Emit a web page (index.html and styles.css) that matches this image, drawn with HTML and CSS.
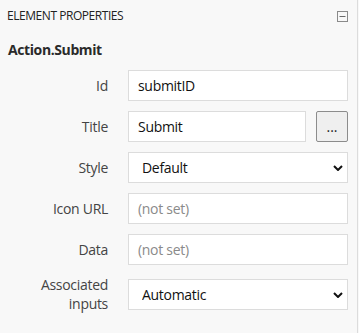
FILE: index.html
```html
<!DOCTYPE html>
<html>
<head>
<meta charset="utf-8">
<link rel="stylesheet" href="styles.css">
</head>
<body>
<div class="panel">
  <div class="header">
    <span class="header-title">ELEMENT PROPERTIES</span>
    <svg class="collapse" width="11" height="11" viewBox="0 0 11 11"><rect x="0.5" y="0.5" width="10" height="10" fill="none" stroke="#8a8a8a"/><line x1="2.5" y1="5.5" x2="8.5" y2="5.5" stroke="#6a6a6a"/></svg>
  </div>
  <div class="element-name">Action.Submit</div>
  <div class="form">
    <div class="row">
      <label class="label">Id</label>
      <input class="field" type="text" value="submitID">
    </div>
    <div class="row">
      <label class="label">Title</label>
      <div class="field-group">
        <input class="field" type="text" value="Submit">
        <button class="more">...</button>
      </div>
    </div>
    <div class="row">
      <label class="label">Style</label>
      <div class="select-wrap">
        <select class="field select"><option>Default</option></select>
        <svg class="chevron" width="10" height="6" viewBox="0 0 10 6"><path d="M1 1 L5 5 L9 1" fill="none" stroke="#111" stroke-width="2"/></svg>
      </div>
    </div>
    <div class="row">
      <label class="label">Icon URL</label>
      <input class="field" type="text" placeholder="(not set)">
    </div>
    <div class="row">
      <label class="label">Data</label>
      <input class="field" type="text" placeholder="(not set)">
    </div>
    <div class="row">
      <label class="label">Associated inputs</label>
      <div class="select-wrap">
        <select class="field select"><option>Automatic</option></select>
        <svg class="chevron" width="10" height="6" viewBox="0 0 10 6"><path d="M1 1 L5 5 L9 1" fill="none" stroke="#111" stroke-width="2"/></svg>
      </div>
    </div>
  </div>
</div>
</body>
</html>
```

FILE: styles.css
```css
html, body {
  margin: 0;
  padding: 0;
  background: #f8f8f8;
}
body {
  font-family: "Open Sans", "Noto Sans", sans-serif;
  color: #222;
}
.panel {
  width: 358px;
  height: 333px;
  box-sizing: border-box;
  border-right: 1px solid #dcdcdc;
  padding: 8px 9px 0 8px;
}
.header {
  display: flex;
  align-items: center;
  justify-content: space-between;
  height: 16px;
  margin-left: -1px;
}
.header-title {
  font-size: 12px;
  line-height: 16px;
  letter-spacing: -0.45px;
  color: #222;
}
.collapse {
  display: block;
}
.element-name {
  margin-top: 16px;
  font-size: 14px;
  line-height: 20px;
  font-weight: 700;
  letter-spacing: -0.4px;
  color: #2a2a2a;
}
.form {
  margin-top: 10px;
  display: flex;
  flex-direction: column;
  gap: 10px;
}
.row {
  display: flex;
  align-items: center;
  gap: 20px;
}
.label {
  width: 100px;
  flex: none;
  text-align: right;
  font-size: 14px;
  line-height: 19px;
  letter-spacing: -0.3px;
  color: #444;
}
.field {
  box-sizing: border-box;
  width: 220px;
  height: 31px;
  margin: 0;
  padding: 0 9px;
  border: 1px solid #dcdcdc;
  background: #fff;
  font-family: inherit;
  font-size: 14px;
  letter-spacing: -0.3px;
  color: #111;
  outline: none;
  border-radius: 0;
}
.field::placeholder {
  color: #8a8a8a;
}
.field-group {
  display: flex;
  gap: 10px;
  width: 220px;
}
.field-group .field {
  width: 178px;
}
.more {
  box-sizing: border-box;
  width: 32px;
  height: 31px;
  margin: 0;
  padding: 0;
  border: 1px solid #8c8c8c;
  border-radius: 2px;
  background: #efefef;
  font-family: inherit;
  font-size: 14px;
  color: #222;
  line-height: 1;
}
.select-wrap {
  position: relative;
  width: 220px;
}
.select {
  appearance: none;
  -webkit-appearance: none;
  padding-left: 13px;
}
.chevron {
  position: absolute;
  right: 5px;
  top: 13px;
  pointer-events: none;
}
```
